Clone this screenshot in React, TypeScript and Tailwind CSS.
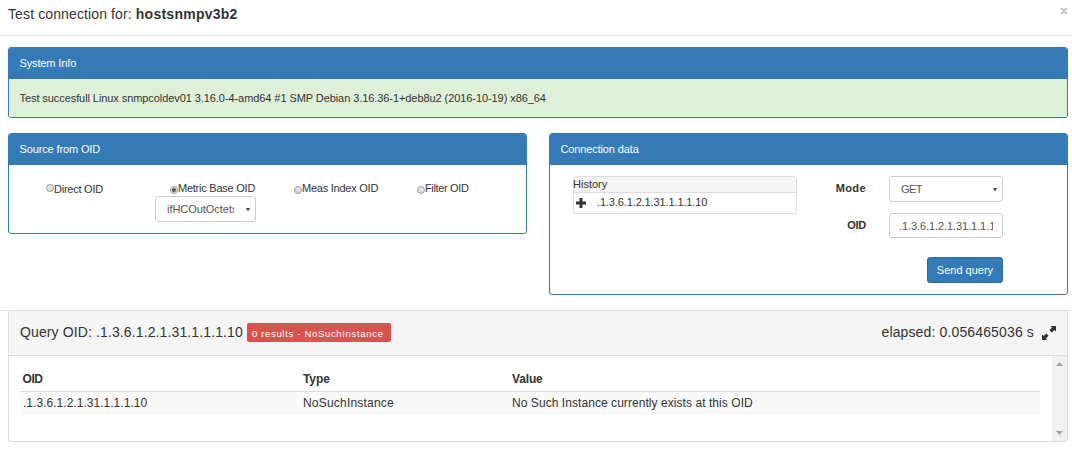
import type { ReactNode } from "react";

function Panel({ title, className, children }: { title: ReactNode; className: string; children: ReactNode }) {
  return (
    <section className={`overflow-hidden rounded-[3px] border border-[#337ab7] bg-white ${className}`}>
      <h2 className="h-[31px] bg-[#337ab7] pl-[10.5px] leading-[30px] tracking-[-0.13px] text-white">{title}</h2>
      {children}
    </section>
  );
}

function Radio({ checked = false, className = "" }: { checked?: boolean; className?: string }) {
  return (
    <span
      className={`flex size-2 shrink-0 items-center justify-center rounded-full border border-[#9b9b9b] bg-linear-to-b from-[#e8e8e8] to-[#d9d9d9] ${className}`}
    >
      {checked && <span className="size-1 rounded-full bg-[#555]" />}
    </span>
  );
}

function Caret() {
  return (
    <svg className="h-[3px] w-1 shrink-0" viewBox="0 0 4 3">
      <path d="M0 0h4L2.3 3h-.6z" fill="#444" />
    </svg>
  );
}

export default function App() {
  return (
    <main className="h-[453px] w-[1072px] overflow-hidden whitespace-nowrap bg-white font-['Liberation_Sans',sans-serif] text-[11px] text-[#333]">
      <header className="flex h-9 justify-between border-b border-[#e5e5e5] pl-2 pr-[3px]">
        <h1 className="text-[14px] leading-[29px]">
          <span className="tracking-[0.12px]">Test connection for: </span>
          <b className="tracking-[0.25px]">hostsnmpv3b2</b>
        </h1>
        <button className="mt-[6px] flex h-[9px] w-[10px] items-center justify-center" aria-label="Close">
          <svg className="size-2" viewBox="0 0 8 8">
            <path d="M1 1l6 6M7 1l-6 6" stroke="#c6c6c6" strokeWidth="2" />
          </svg>
        </button>
      </header>

      <div className="px-2 pr-1 pt-[11px]">
        <Panel title="System Info" className="h-[71px]">
          <p className="h-[38px] bg-[#dff0d8] pl-[10.5px] leading-[38px] tracking-[-0.076px]">
            Test succesfull Linux snmpcoldev01 3.16.0-4-amd64 #1 SMP Debian 3.16.36-1+deb8u2 (2016-10-19) x86_64
          </p>
        </Panel>
      </div>

      <div className="flex h-[192px] items-start gap-[22px] px-2 pr-1 pt-[15px]">
        <Panel title="Source from OID" className="h-[101px] w-[519px]">
          <div className="flex pl-[37px] pt-[16px] leading-[15px] tracking-[-0.24px]">
            <label className="flex w-[109px] pt-px">
              <Radio className="mt-[2px]" />
              <span>Direct OID</span>
            </label>
            <div className="w-[139px]">
              <label className="flex pl-[15px]">
                <Radio checked className="mt-[5px]" />
                <span>Metric Base OID</span>
              </label>
              <div className="flex h-[26px] w-[101px] items-center justify-between rounded-[3px] border border-[#ccc] pl-[11px] pr-[5px] tracking-[-0.04px] text-[#555]">
                <span className="w-[67px] overflow-hidden">ifHCOutOctets</span>
                <Caret />
              </div>
            </div>
            <label className="flex w-[123px]">
              <Radio className="mt-[5px]" />
              <span>Meas Index OID</span>
            </label>
            <label className="flex tracking-[-0.35px]">
              <Radio className="mt-[5px]" />
              <span>Filter OID</span>
            </label>
          </div>
        </Panel>

        <Panel title="Connection data" className="h-[162px] w-[519px]">
          <div className="flex pl-[23px] pt-[11px]">
            <div className="h-[38px] w-[224px] rounded-[3px] border border-[#ddd]">
              <div className="h-4 border-b border-[#ddd] bg-[#f5f5f5] leading-[15px]">
                <span className="-ml-px">History</span>
              </div>
              <div className="flex h-5 items-center pl-[2px] leading-[18px]">
                <svg className="h-[10px] w-[10px]" viewBox="0 0 10 10">
                  <path d="M3.5 0h3v3.5H10v3H6.5V10h-3V6.5H0v-3h3.5z" fill="#333" />
                </svg>
                <span className="-mt-0.5 pl-[11px] tracking-[-0.12px]">.1.3.6.1.2.1.31.1.1.1.10</span>
              </div>
            </div>
            <form className="grid w-[206px] grid-cols-[69px_114px] gap-x-[23px]">
              <b className="h-[37px] text-right leading-[24px] tracking-[0.4px]">Mode</b>
              <div className="flex h-[26px] items-center justify-between rounded-[3px] border border-[#ccc] pl-[11px] pr-[5px] text-[#555]">
                <span className="tracking-[-0.6px]">GET</span>
                <Caret />
              </div>
              <b className="h-[44px] text-right leading-[24px] tracking-[-0.3px]">OID</b>
              <div className="h-[25px] rounded-[3px] border border-[#ccc] px-[9px] leading-[25px] text-[#555]">
                <div className="overflow-hidden tracking-[-0.08px]">.1.3.6.1.2.1.31.1.1.1.10</div>
              </div>
              <button
                type="button"
                className="col-start-2 h-[26px] w-[76px] justify-self-end rounded-[3px] border border-[#2e6da4] bg-[#337ab7] text-white"
              >
                Send query
              </button>
            </form>
          </div>
        </Panel>
      </div>

      <footer className="border-t border-[#e5e5e5] pl-2 pr-1">
        <section className="-mt-px h-[132px] overflow-hidden rounded-[3px] border border-[#ddd]">
          <div className="flex h-[45px] items-center border-b border-[#ddd] bg-[#f5f5f5] pb-[2px] pl-[11px] pr-[11px] text-[14px]">
            <span className="tracking-[0.12px]">Query OID: .1.3.6.1.2.1.31.1.1.1.10</span>
            <span className="ml-1 h-[19px] w-[144px] rounded-[2px] bg-[#d9534f] pl-[5px] text-[9.5px] leading-[21px] tracking-[0.68px] text-white">
              0 results - NoSuchInstance
            </span>
            <span className="ml-auto tracking-[0.14px]">elapsed: 0.056465036 s</span>
            <svg className="ml-2 mt-[2px] size-[14px]" viewBox="0 0 14 14" fill="#333">
              <path d="M8.5 0H14v5.5l-1.6-1.6-2.7 2.7-2.3-2.3 2.7-2.7z" />
              <path d="M5.5 14H0V8.5l1.6 1.6 2.7-2.7 2.3 2.3-2.7 2.7z" />
            </svg>
          </div>
          <div className="flex h-[85px] justify-between pl-[11px]">
            <table className="mt-[11px] h-12 w-[1020px] table-fixed border-collapse text-left text-[12px]">
              <thead>
                <tr className="h-6 border-b border-[#ddd]">
                  <th className="w-[280px] pb-0 pl-[2.5px] pt-px tracking-[-0.4px]">OID</th>
                  <th className="w-[209px] pl-[3px] pt-px tracking-[-0.1px]">Type</th>
                  <th className="pl-[3px] pt-px tracking-[-0.15px]">Value</th>
                </tr>
              </thead>
              <tbody>
                <tr className="h-6 bg-[#f9f9f9]">
                  <td className="pb-px pl-[3px] tracking-[0.03px]">.1.3.6.1.2.1.31.1.1.1.10</td>
                  <td className="pb-px pl-[3px] tracking-[0.2px]">NoSuchInstance</td>
                  <td className="pb-px pl-[3px] tracking-[0.06px]">No Such Instance currently exists at this OID</td>
                </tr>
              </tbody>
            </table>
            <div className="flex w-[15px] flex-col items-center justify-between bg-[#f1f1f1] pb-[6px] pt-[6px]">
              <svg className="h-1 w-[7px]" viewBox="0 0 7 4">
                <path d="M0 4h7L3.5 0z" fill="#a3a3a3" />
              </svg>
              <svg className="h-1 w-[7px]" viewBox="0 0 7 4">
                <path d="M0 0h7L3.5 4z" fill="#a3a3a3" />
              </svg>
            </div>
          </div>
        </section>
      </footer>
    </main>
  );
}
